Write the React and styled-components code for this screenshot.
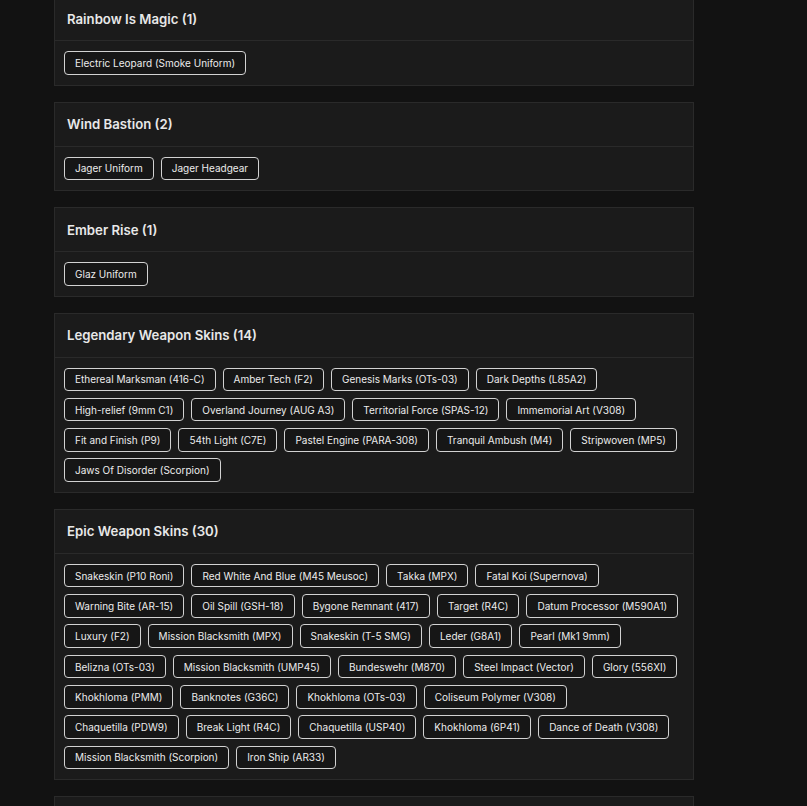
import React from 'react';
import styled, { createGlobalStyle } from 'styled-components';

const sections = [
  { title: 'Rainbow Is Magic', items: ['Electric Leopard (Smoke Uniform)'] },
  { title: 'Wind Bastion', items: ['Jager Uniform', 'Jager Headgear'] },
  { title: 'Ember Rise', items: ['Glaz Uniform'] },
  {
    title: 'Legendary Weapon Skins',
    items: [
      'Ethereal Marksman (416-C)', 'Amber Tech (F2)', 'Genesis Marks (OTs-03)', 'Dark Depths (L85A2)',
      'High-relief (9mm C1)', 'Overland Journey (AUG A3)', 'Territorial Force (SPAS-12)', 'Immemorial Art (V308)',
      'Fit and Finish (P9)', '54th Light (C7E)', 'Pastel Engine (PARA-308)', 'Tranquil Ambush (M4)', 'Stripwoven (MP5)',
      'Jaws Of Disorder (Scorpion)',
    ],
  },
  {
    title: 'Epic Weapon Skins',
    items: [
      'Snakeskin (P10 Roni)', 'Red White And Blue (M45 Meusoc)', 'Takka (MPX)', 'Fatal Koi (Supernova)',
      'Warning Bite (AR-15)', 'Oil Spill (GSH-18)', 'Bygone Remnant (417)', 'Target (R4C)', 'Datum Processor (M590A1)',
      'Luxury (F2)', 'Mission Blacksmith (MPX)', 'Snakeskin (T-5 SMG)', 'Leder (G8A1)', 'Pearl (Mk1 9mm)',
      'Belizna (OTs-03)', 'Mission Blacksmith (UMP45)', 'Bundeswehr (M870)', 'Steel Impact (Vector)', 'Glory (556XI)',
      'Khokhloma (PMM)', 'Banknotes (G36C)', 'Khokhloma (OTs-03)', 'Coliseum Polymer (V308)',
      'Chaquetilla (PDW9)', 'Break Light (R4C)', 'Chaquetilla (USP40)', 'Khokhloma (6P41)', 'Dance of Death (V308)',
      'Mission Blacksmith (Scorpion)', 'Iron Ship (AR33)',
    ],
  },
  { title: 'Seasonal Items', items: [] },
];

export default function App() {
  return (
    <>
      <GlobalStyle />
      <Page>
        {sections.map((s) => (
          <Card key={s.title}>
            <Header>
              <Title>
                {s.title} ({s.items.length})
              </Title>
            </Header>
            <Body>
              {s.items.map((it, i) => (
                <Tag key={i}>{it}</Tag>
              ))}
            </Body>
          </Card>
        ))}
      </Page>
    </>
  );
}

const GlobalStyle = createGlobalStyle`
  html, body {
    margin: 0;
    background: #121212;
    font-family: Inter, "Noto Sans", sans-serif;
    overflow: hidden;
  }
`;

const Page = styled.div`
  width: 640px;
  margin: -4px 0 0 54px;
  display: flex;
  flex-direction: column;
  gap: 16px;
`;

const Card = styled.section`
  background: #1b1b1b;
  border: 1px solid #2a2a2a;
  box-sizing: border-box;
`;

const Header = styled.div`
  height: 43px;
  padding: 0 12px;
  display: flex;
  align-items: center;
  border-bottom: 1px solid #2a2a2a;
`;

const Title = styled.h3`
  margin: 0;
  font-size: 13.2px;
  font-weight: 600;
  color: #e8e8e8;
`;

const Body = styled.div`
  padding: 10px 9px;
  display: flex;
  flex-wrap: wrap;
  gap: 6.8px 7px;
`;

const Tag = styled.span`
  height: 23.5px;
  box-sizing: border-box;
  padding: 0 10px;
  display: inline-flex;
  align-items: center;
  border: 1px solid #d2d2d2;
  border-radius: 4px;
  background: #161616;
  color: #ececec;
  font-size: 10px;
  white-space: nowrap;
`;
